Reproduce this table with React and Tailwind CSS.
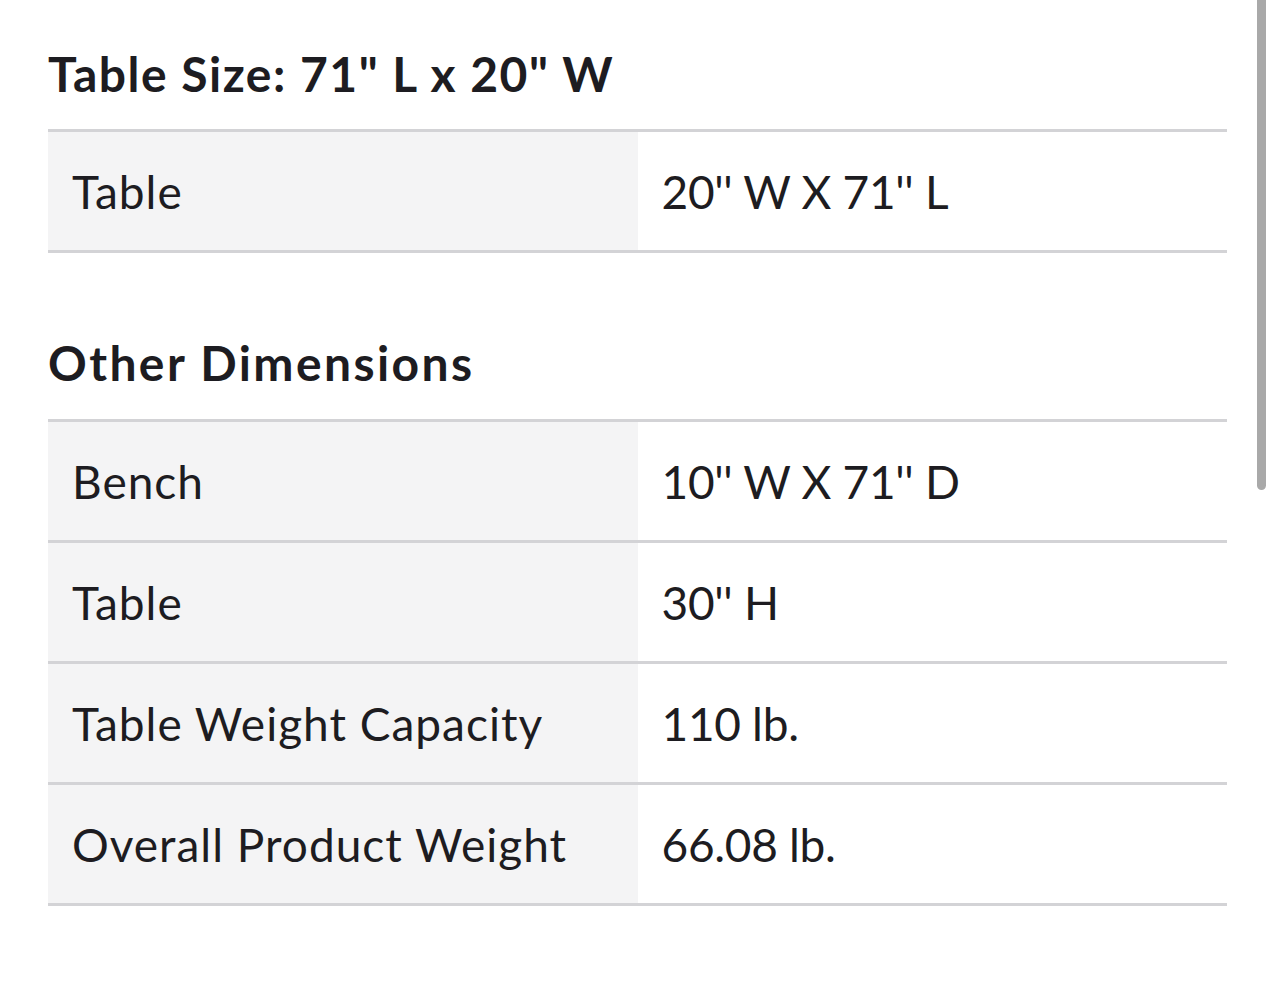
import React from "react";

const Row = ({ label, value }) => (
  <div className="flex h-[121px] border-b-[3px] border-[#d3d3d6]">
    <div className="w-1/2 bg-[#f4f4f5] flex items-center pl-[24px] tracking-[1px]">
      <span>{label}</span>
    </div>
    <div className="w-1/2 flex items-center pl-[24px] tracking-[-0.3px]">
      <span>{value}</span>
    </div>
  </div>
);

export default function App() {
  return (
    <div
      className="relative w-[1275px] h-[988px] bg-white text-[#1d1c21] overflow-hidden"
      style={{ fontFamily: "Lato, 'Open Sans', sans-serif" }}
    >
      <div className="px-12 pt-[44px]">
        <h2 className="text-[48px] font-bold leading-[60px] tracking-[1.5px]">
          Table Size: 71" L x 20" W
        </h2>
        <div className="mt-[25px] border-t-[3px] border-[#d3d3d6] text-[46px]">
          <Row label="Table" value={"20'' W X 71'' L"} />
        </div>
        <h2 className="mt-[80px] text-[48px] font-bold leading-[60px] tracking-[2.4px]">
          Other Dimensions
        </h2>
        <div className="mt-[26px] border-t-[3px] border-[#d3d3d6] text-[46px]">
          <Row label="Bench" value={"10'' W X 71'' D"} />
          <Row label="Table" value={"30'' H"} />
          <Row label="Table Weight Capacity" value="110 lb." />
          <Row label="Overall Product Weight" value="66.08 lb." />
        </div>
      </div>
      <div className="absolute left-[1257px] top-0 w-[9px] h-[490px] rounded-b-full bg-[#a9a9a9]" />
    </div>
  );
}
